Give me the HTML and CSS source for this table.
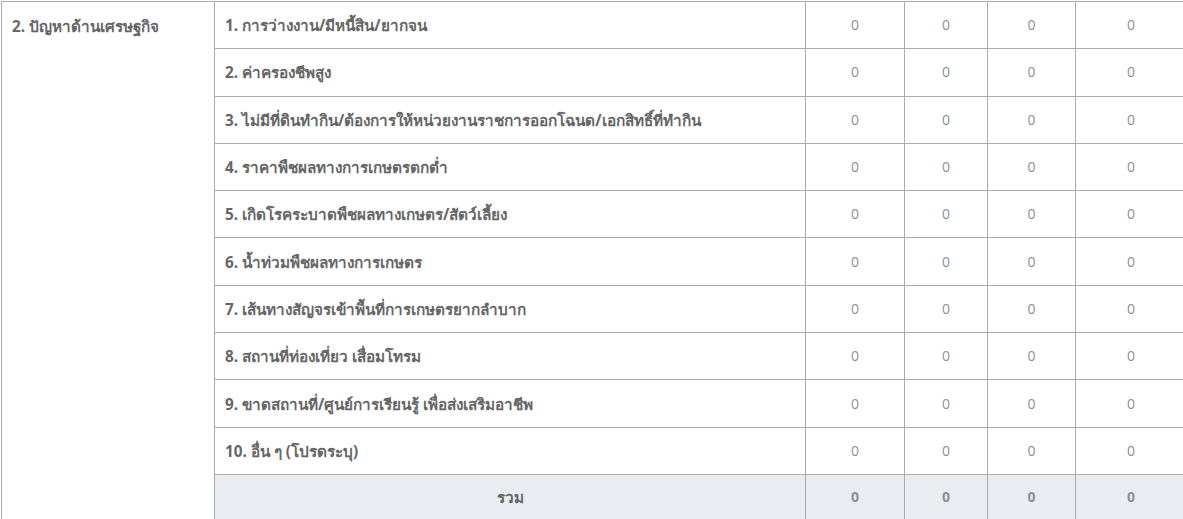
FILE: index.html
```html
<!DOCTYPE html>
<html lang="th">
<head>
<meta charset="utf-8">
<link rel="stylesheet" href="styles.css">
</head>
<body>
<table class="report">
  <colgroup>
    <col class="c-group"><col class="c-item"><col class="c-n1"><col class="c-n2"><col class="c-n3"><col class="c-n4">
  </colgroup>
  <tbody>
    <tr>
      <td class="group" rowspan="11">2. ปัญหาด้านเศรษฐกิจ</td>
      <td class="item">1. การว่างงาน/มีหนี้สิน/ยากจน</td>
      <td class="num">0</td><td class="num">0</td><td class="num">0</td><td class="num">0</td>
    </tr>
    <tr>
      <td class="item">2. ค่าครองชีพสูง</td>
      <td class="num">0</td><td class="num">0</td><td class="num">0</td><td class="num">0</td>
    </tr>
    <tr>
      <td class="item">3. ไม่มีที่ดินทำกิน/ต้องการให้หน่วยงานราชการออกโฉนด/เอกสิทธิ์ที่ทำกิน</td>
      <td class="num">0</td><td class="num">0</td><td class="num">0</td><td class="num">0</td>
    </tr>
    <tr>
      <td class="item">4. ราคาพืชผลทางการเกษตรตกต่ำ</td>
      <td class="num">0</td><td class="num">0</td><td class="num">0</td><td class="num">0</td>
    </tr>
    <tr>
      <td class="item">5. เกิดโรคระบาดพืชผลทางเกษตร/สัตว์เลี้ยง</td>
      <td class="num">0</td><td class="num">0</td><td class="num">0</td><td class="num">0</td>
    </tr>
    <tr>
      <td class="item">6. น้ำท่วมพืชผลทางการเกษตร</td>
      <td class="num">0</td><td class="num">0</td><td class="num">0</td><td class="num">0</td>
    </tr>
    <tr>
      <td class="item">7. เส้นทางสัญจรเข้าพื้นที่การเกษตรยากลำบาก</td>
      <td class="num">0</td><td class="num">0</td><td class="num">0</td><td class="num">0</td>
    </tr>
    <tr>
      <td class="item">8. สถานที่ท่องเที่ยว เสื่อมโทรม</td>
      <td class="num">0</td><td class="num">0</td><td class="num">0</td><td class="num">0</td>
    </tr>
    <tr>
      <td class="item">9. ขาดสถานที่/ศูนย์การเรียนรู้ เพื่อส่งเสริมอาชีพ</td>
      <td class="num">0</td><td class="num">0</td><td class="num">0</td><td class="num">0</td>
    </tr>
    <tr>
      <td class="item">10. อื่น ๆ (โปรดระบุ)</td>
      <td class="num">0</td><td class="num">0</td><td class="num">0</td><td class="num">0</td>
    </tr>
    <tr class="total">
      <td class="item total-label">รวม</td>
      <td class="num">0</td><td class="num">0</td><td class="num">0</td><td class="num">0</td>
    </tr>
  </tbody>
</table>
</body>
</html>
```

FILE: styles.css
```css
html, body {
  margin: 0;
  padding: 0;
  background: #ffffff;
}

body {
  padding: 1px 0 0 1px;
  overflow: hidden;
  font-family: "Noto Sans", "Liberation Sans", sans-serif;
  font-size: 15.3px;
  color: #666666;
}

.report {
  border-collapse: collapse;
  table-layout: fixed;
  width: 1185px;
}

.c-group { width: 213px; }
.c-item { width: 591px; }
.c-n1 { width: 99px; }
.c-n2 { width: 83px; }
.c-n3 { width: 88px; }
.c-n4 { width: 111px; }

.report td {
  border: 1px solid #ababab;
  height: 47.3px;
  padding: 0 10px;
  box-sizing: border-box;
  line-height: 20px;
}

.group {
  vertical-align: top;
  padding-top: 14px !important;
  font-weight: bold;
  color: #666666;
}

.item {
  font-weight: bold;
  color: #666666;
  vertical-align: middle;
}

.num {
  text-align: center;
  color: #8c8f96;
  font-family: "Open Sans", "Noto Sans", sans-serif;
  font-size: 14px;
  vertical-align: middle;
}

.total td {
  background: #e9ecf1;
  height: 60px;
  padding-bottom: 14px;
}

.total .num {
  font-weight: bold;
}

.total-label {
  text-align: center;
}
```
